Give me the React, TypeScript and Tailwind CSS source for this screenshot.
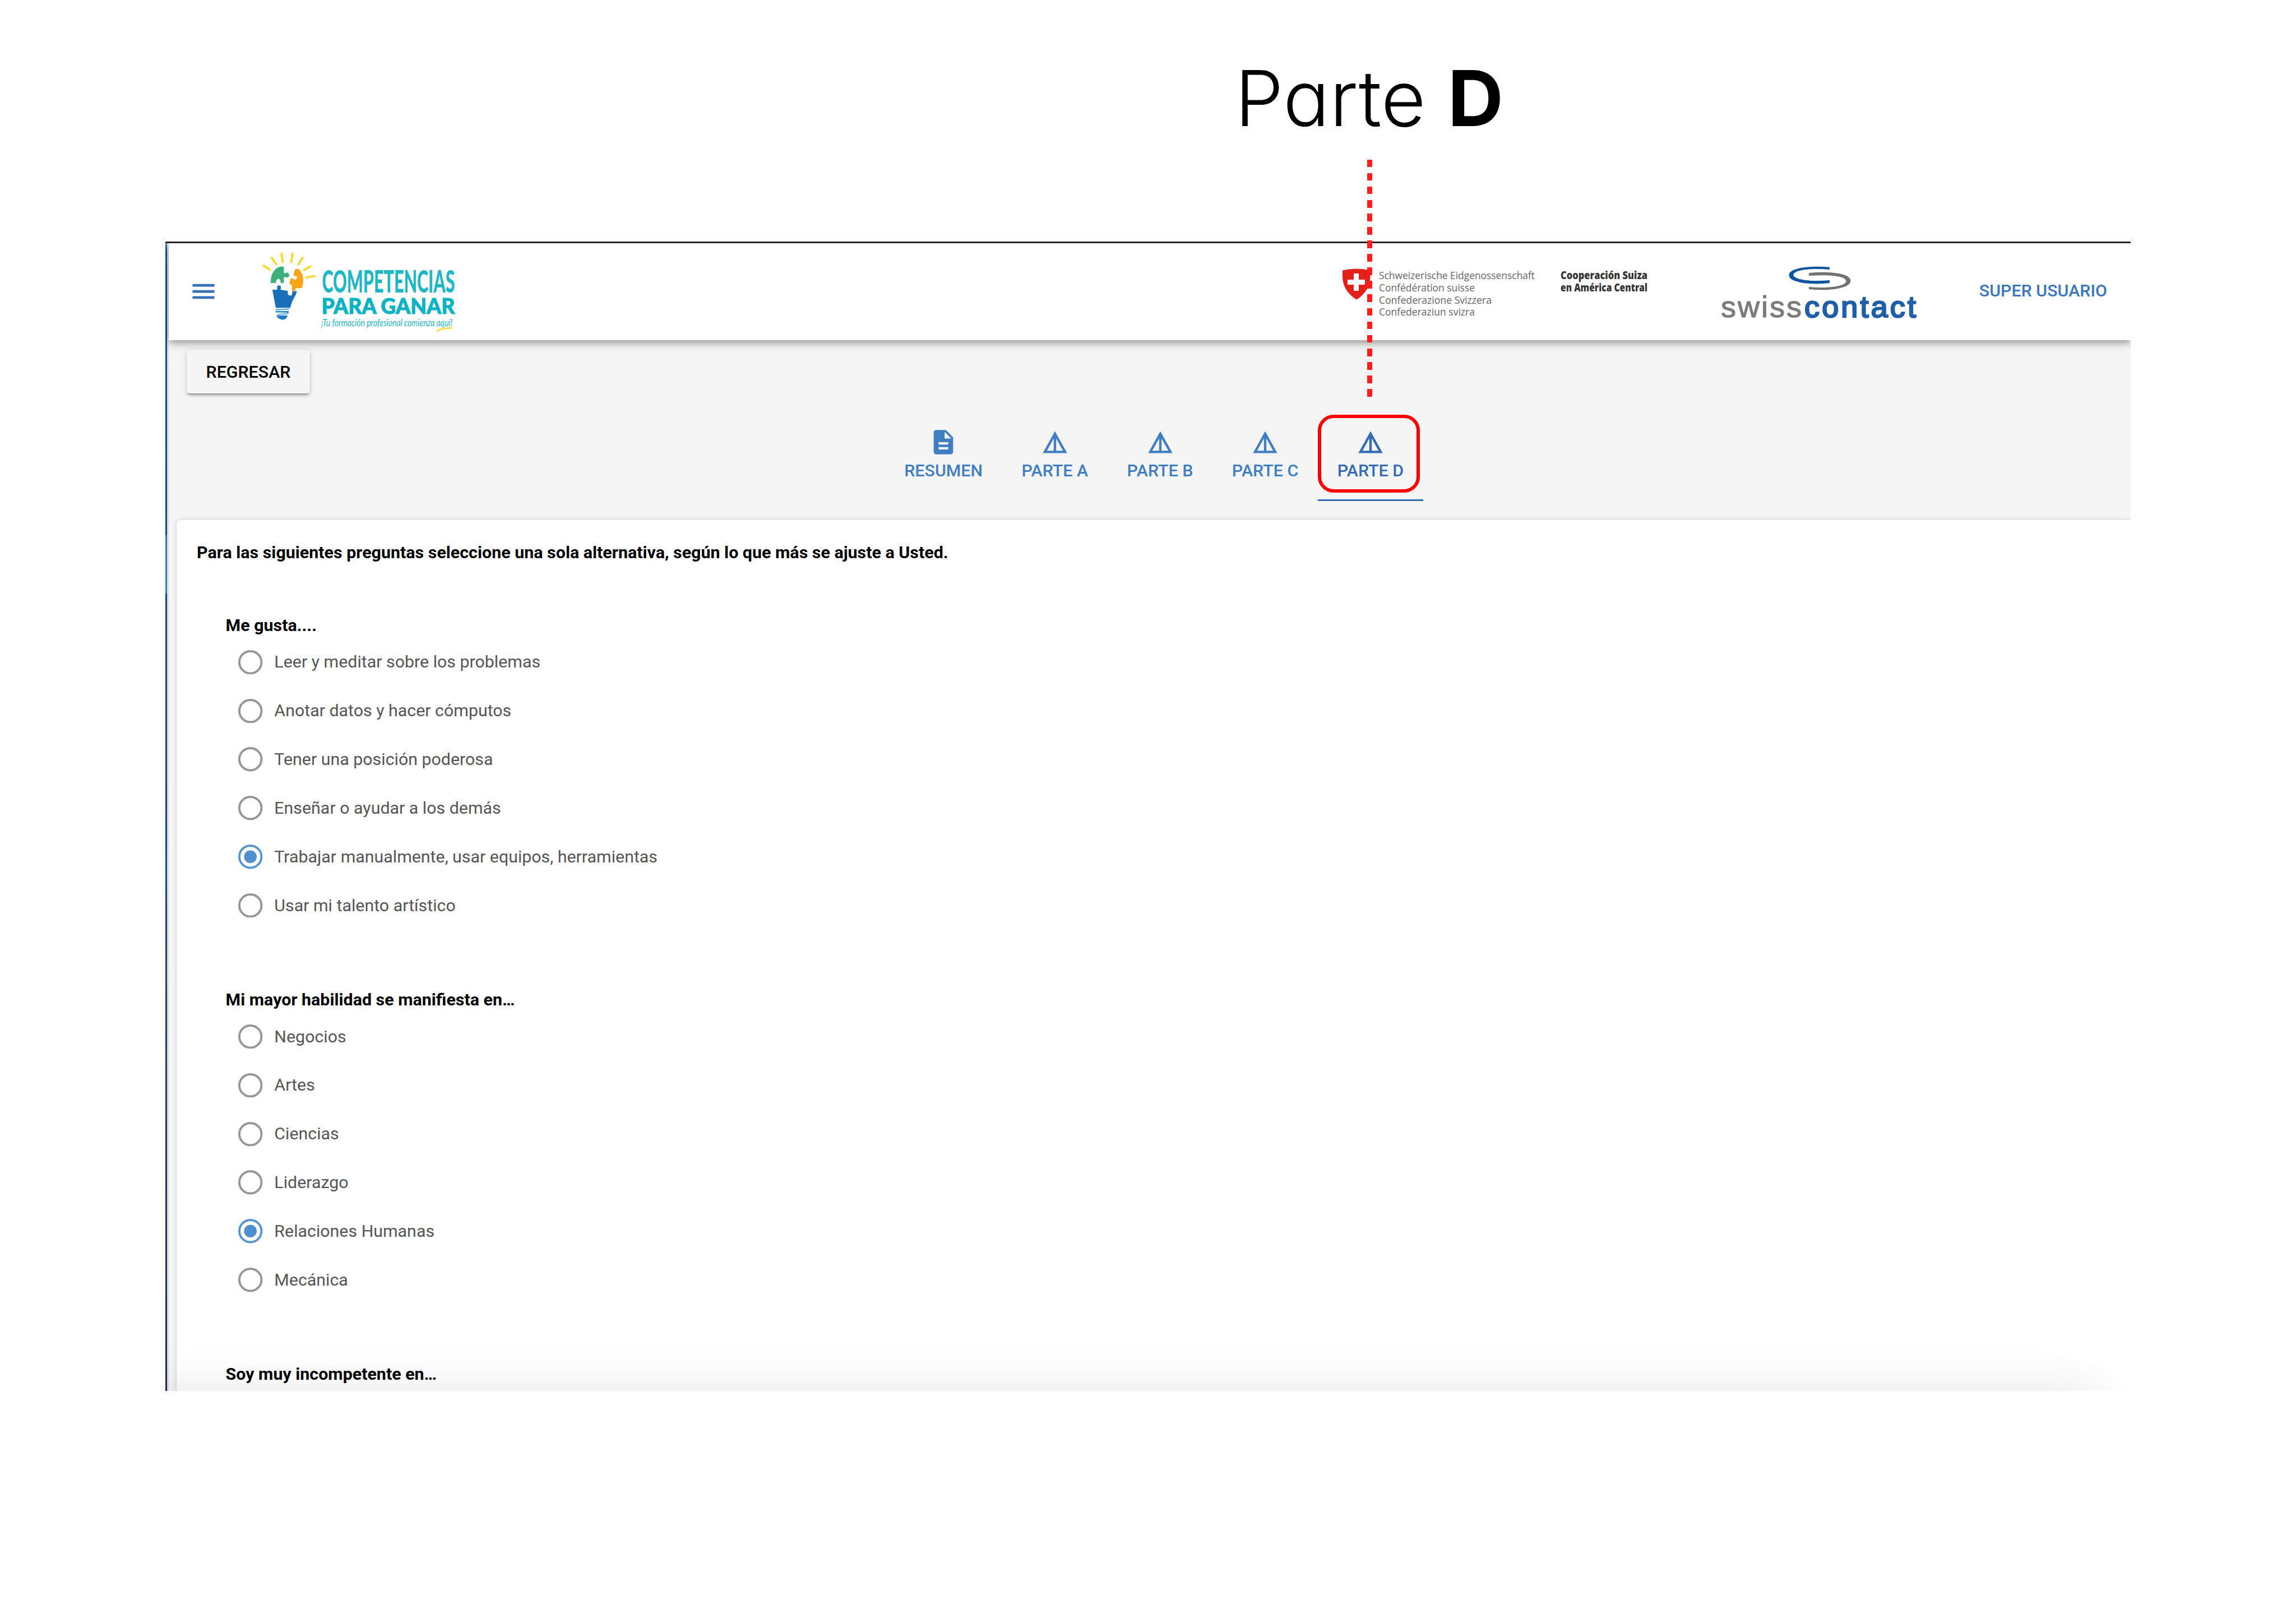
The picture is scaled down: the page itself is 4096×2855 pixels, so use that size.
type Question = { title: string; options: string[]; selected?: number };

const questions: Question[] = [
  {
    title: 'Me gusta....',
    options: [
      'Leer y meditar sobre los problemas',
      'Anotar datos y hacer cómputos',
      'Tener una posición poderosa',
      'Enseñar o ayudar a los demás',
      'Trabajar manualmente, usar equipos, herramientas',
      'Usar mi talento artístico',
    ],
    selected: 4,
  },
  {
    title: 'Mi mayor habilidad se manifiesta en…',
    options: ['Negocios', 'Artes', 'Ciencias', 'Liderazgo', 'Relaciones Humanas', 'Mecánica'],
    selected: 4,
  },
  { title: 'Soy muy incompetente en…', options: [] },
];

const tabs = ['RESUMEN', 'PARTE A', 'PARTE B', 'PARTE C', 'PARTE D'];

function MenuIcon() {
  return (
    <svg viewBox="0 0 24 24" className="h-[52.1px] w-[52.1px] shrink-0 fill-[#3570b8]">
      <path d="M3 18.100h18v-2.200H3v2.200zm0-5h18v-2.200H3v2.200zm0-7.200v2.200h18V5.900H3z" />
    </svg>
  );
}

function DocumentIcon() {
  return (
    <svg viewBox="0 0 24 24" className="h-[52px] w-[52px] fill-current">
      <path d="M14 2H6c-1.100 0-1.990.9-1.990 2L4 20c0 1.100.890 2 1.990 2H18c1.100 0 2-.9 2-2V8l-6-6zm2 16H8v-2h8v2zm0-4H8v-2h8v2zm-3-5V3.500L18.500 9H13z" />
    </svg>
  );
}

function DetailsIcon() {
  return (
    <svg viewBox="0 0 24 24" className="h-[52px] w-[52px] fill-current">
      <path d="M12 3L2 21h20L12 3zm1 5.920L18.600 19H13V8.920zm-2 0V19H5.400L11 8.920z" />
    </svg>
  );
}

function CompetenciasLogo() {
  return (
    <svg viewBox="455 440.500 370 160" className="ml-[66.4px] h-[160px] w-[370px] shrink-0 overflow-visible">
      <g transform="translate(450.800 438.600) scale(0.20305)">
        <g stroke="#fdd92e" strokeWidth="19" strokeLinecap="round">
          <path d="M96 176L150 213M167 108L206 164M253 72L266 146M350 72L340 146M438 108L403 166M508 182L452 216M472 281L544 269" />
        </g>
        <path
          fill="#3cb078"
          d="M158 330C160 280 165 250 190 220C215 190 240 180 274 187V238L288 246C300 228 320 238 320 260C320 281 300 287 288 275L274 280V330H245C248 305 238 292 224 293C210 295 203 310 205 330Z"
        />
        <path
          fill="#f9a51a"
          d="M374 206C408 198 425 225 437 255C448 290 446 335 431 374L388 375C372 376 376 386 373 399H345V348C325 345 316 325 329 310C325 288 350 282 365 300C385 302 396 285 386 270L360 264C360 240 368 220 374 206Z"
        />
        <path
          fill="#1b6fb8"
          d="M173 388H213L217 375C203 344 257 340 247 373L245 388L310 399C300 430 320 447 343 436C350 422 346 405 350 401H388C382 442 348 470 330 547H203Q188 470 173 388Z"
        />
        <path fill="#5aa3dc" d="M201 558L322 554V564L203 570Z" />
        <path fill="#2d86cb" d="M201 576H316V590L203 588Z" />
        <path fill="#5aa3dc" d="M230 600L316 592V602L206 612Z" />
        <path fill="#1f7ac2" d="M208 614H306Q302 648 262 652Q222 650 208 614Z" />
      </g>
      <g fontFamily="Lato, sans-serif" fill="#1fb7c6">
        <text x="574.500" y="522" fontSize="54.500" fontWeight="900" textLength="237" lengthAdjust="spacingAndGlyphs">
          COMPETENCIAS
        </text>
        <text
          x="573.500"
          y="560.300"
          fontSize="38.500"
          fontWeight="900"
          textLength="238"
          lengthAdjust="spacingAndGlyphs"
          fill="#0cb3c3"
          stroke="#0cb3c3"
          strokeWidth="1"
        >
          PARA GANAR
        </text>
        <text
          x="573"
          y="582.500"
          fontSize="17"
          fontStyle="italic"
          fontWeight="400"
          textLength="234"
          lengthAdjust="spacingAndGlyphs"
        >
          ¡Tu formación profesional comienza aquí!
        </text>
      </g>
      <path d="M779 592Q789 585 806 586" fill="none" stroke="#fbe04a" strokeWidth="3.500" />
    </svg>
  );
}

function SwissCooperationLogo() {
  return (
    <svg viewBox="2385 440.500 560 160" className="ml-auto h-[160px] w-[560px] shrink-0 overflow-visible">
      <path
        fill="#e4201b"
        d="M2394 483Q2419 477 2443.500 483V494C2443.500 514 2431 528 2419 535C2407 528 2394 514 2394 494Z"
      />
      <path fill="#fff" d="M2414 488.500h9v11h11v9h-11v11h-9v-11h-11v-9h11z" />
      <g fontFamily="Open Sans, sans-serif" fontSize="18.500" fill="#666">
        <text x="2459" y="498" textLength="278" lengthAdjust="spacingAndGlyphs">
          Schweizerische Eidgenossenschaft
        </text>
        <text x="2459" y="520" textLength="171" lengthAdjust="spacingAndGlyphs">
          Confédération suisse
        </text>
        <text x="2459" y="542.500" textLength="201" lengthAdjust="spacingAndGlyphs">
          Confederazione Svizzera
        </text>
        <text x="2459" y="563.500" textLength="171" lengthAdjust="spacingAndGlyphs">
          Confederaziun svizra
        </text>
      </g>
      <g fontFamily="Open Sans, sans-serif" fontSize="18.500" fontWeight="800" fill="#333">
        <text x="2783" y="498" textLength="155" lengthAdjust="spacingAndGlyphs">
          Cooperación Suiza
        </text>
        <text x="2783" y="520" textLength="155" lengthAdjust="spacingAndGlyphs">
          en América Central
        </text>
      </g>
    </svg>
  );
}

function SwisscontactLogo() {
  return (
    <svg viewBox="3060 440.500 365 160" className="mr-[104.5px] ml-[115px] h-[160px] w-[365px] shrink-0 overflow-visible">
      <path
        fill="#0f55a1"
        d="M3263 477.300C3230 474 3190.500 478 3190.500 491.500C3190.500 505 3230 509.500 3263 505.500V500.500C3232 503.500 3198.500 500 3198.500 491C3198.500 481.500 3232 478.500 3263 481.500Z"
      />
      <path
        fill="#727272"
        d="M3226 487.500C3262 484 3300.500 488 3300.500 501.500C3300.500 515 3262 520.500 3226 516.500V512.500C3256 515.500 3292.500 512 3292.500 502C3292.500 492 3256 490.500 3226 492.500Z"
      />
      <g fontFamily="Liberation Sans, Arial, sans-serif" fontSize="54">
        <text x="3069" y="566" textLength="144" fill="#7c7c7c" stroke="#7c7c7c" strokeWidth="1.200">
          swiss
        </text>
        <text x="3218" y="566" textLength="199" fill="#1f5fa8" stroke="#1f5fa8" strokeWidth="2.600">
          contact
        </text>
      </g>
    </svg>
  );
}

function Header() {
  return (
    <header className="relative z-10 flex h-[173.6px] items-center bg-white pr-[42px] pl-[35.7px] shadow-[0_4px_9px_-2px_rgba(0,0,0,0.2),0_9px_11px_0_rgba(0,0,0,0.14),0_2px_22px_0_rgba(0,0,0,0.12)]">
      <MenuIcon />
      <CompetenciasLogo />
      <SwissCooperationLogo />
      <SwisscontactLogo />
      <span className="mb-[3px] text-[30.4px] leading-[36px] font-medium whitespace-nowrap text-[#3a76bd]">
        SUPER USUARIO
      </span>
    </header>
  );
}

function Tab({ label, active }: { label: string; active: boolean }) {
  return (
    <div
      className={
        active
          ? 'relative flex h-[156.3px] flex-col items-center border-b-3 border-[#326bb3] px-[34.7px] pt-[26px] text-[#326cb5]'
          : 'flex h-[156.3px] flex-col items-center px-[34.7px] pt-[26px] text-[#407ec3]'
      }
    >
      {label === 'RESUMEN' ? <DocumentIcon /> : <DetailsIcon />}
      <span className="mt-[6.4px] text-[30.4px] leading-[36px] font-medium whitespace-nowrap">{label}</span>
      {active && (
        <div className="absolute top-[3px] left-0 h-[138.5px] w-[182.5px] rounded-[28px] border-6 border-[#ff0000]" />
      )}
    </div>
  );
}

function Option({ label, checked }: { label: string; checked: boolean }) {
  return (
    <label className="flex h-[86.87px] items-center gap-[20.5px] pl-[23.4px]">
      <svg viewBox="0 0 20 20" className="h-[43.4px] w-[43.4px] shrink-0">
        <circle
          cx="10"
          cy="10"
          r="9.100"
          fill="none"
          strokeWidth="1.800"
          className={checked ? 'stroke-[#5594d4]' : 'stroke-[#969696]'}
        />
        {checked && <circle cx="10" cy="10" r="5.200" className="fill-[#4f8fd0]" />}
      </svg>
      <span className="text-[30.35px] leading-[36px] text-[#555555]">{label}</span>
    </label>
  );
}

function Callout() {
  return (
    <div className="absolute top-[284.5px] left-[2439px] z-20 flex w-[9px] flex-col gap-[10.35px]">
      {Array.from({ length: 18 }, (_, i) => (
        <div key={i} className="h-[13.75px] bg-[#ff1d1d]" />
      ))}
    </div>
  );
}

export default function App() {
  return (
    <div className="relative h-[2855px] w-[4096px] overflow-hidden bg-white font-['Roboto',sans-serif] text-black">
      <h1 className="h-[430.7px] pt-[91px] pl-[2203px] font-['Inter',sans-serif] text-[138px] leading-[168px] font-light whitespace-nowrap [font-feature-settings:'cv11']">
        Parte <b className="font-bold">D</b>
      </h1>

      <main className="relative ml-[295px] flex h-[2051px] w-[3506px] flex-col overflow-hidden">
        <div className="h-[3px] shrink-0 bg-[#272727]" />
        <div className="flex min-h-0 flex-1">
          <div className="w-[3px] shrink-0 bg-[linear-gradient(180deg,#4a86c6_0,#0a56a2_12px,#004f9c_300px,#0f4a7c_520px,#2b7ac2_521px,#3182c8_624px,#12407c_626px,#143f80_1000px,#06529a_1120px,#1c3f7c_1180px,#1b2b5c_2048px)]" />
          <div className="w-[3px] shrink-0 bg-[#dcdcdc]" />
          <div className="flex min-w-0 flex-1 flex-col bg-[#f5f5f5]">
            <Header />
            <button className="mt-[17.2px] ml-[32px] h-[78px] w-[220px] shrink-0 rounded-[5px] bg-[#f5f5f5] pt-[2px] text-[30.4px] leading-[36px] font-medium shadow-[0_6px_2px_-4px_rgba(0,0,0,0.2),0_4px_4px_0_rgba(0,0,0,0.16),0_2px_9px_0_rgba(0,0,0,0.14)]">
              REGRESAR
            </button>
            <nav className="mt-[35px] ml-[1277.5px] flex shrink-0">
              {tabs.map((t) => (
                <Tab key={t} label={t} active={t === 'PARTE D'} />
              ))}
            </nav>
            <section className="mt-[34.7px] ml-[14.4px] flex-1 rounded-tl-[8px] bg-white pt-[39.5px] pl-[35.7px] shadow-[0_4px_2px_-2px_rgba(0,0,0,0.2),0_2px_2px_0_rgba(0,0,0,0.14),0_0_8px_0_rgba(0,0,0,0.15)]">
              <p className="text-[30.42px] leading-[36px] font-bold">
                Para las siguientes preguntas seleccione una sola alternativa, según lo que más se ajuste a Usted.
              </p>
              <div className="mt-[93.6px] flex flex-col gap-[105.1px] pl-[51.5px]">
                {questions.map((q) => (
                  <div key={q.title}>
                    <h2 className="mb-[4.4px] h-[37.5px] text-[30.4px] leading-[36px] font-bold">{q.title}</h2>
                    <div className="-mt-[1.5px] mb-[1.5px] ml-[-0.5px]">
                      {q.options.map((o, i) => (
                        <Option key={o} label={o} checked={i === q.selected} />
                      ))}
                    </div>
                  </div>
                ))}
              </div>
            </section>
          </div>
        </div>
        <div className="absolute top-[2061px] right-[58px] left-[-60px] h-[100px] shadow-[0_0_100px_rgba(0,0,0,0.12)]" />
      </main>

      <Callout />
    </div>
  );
}
